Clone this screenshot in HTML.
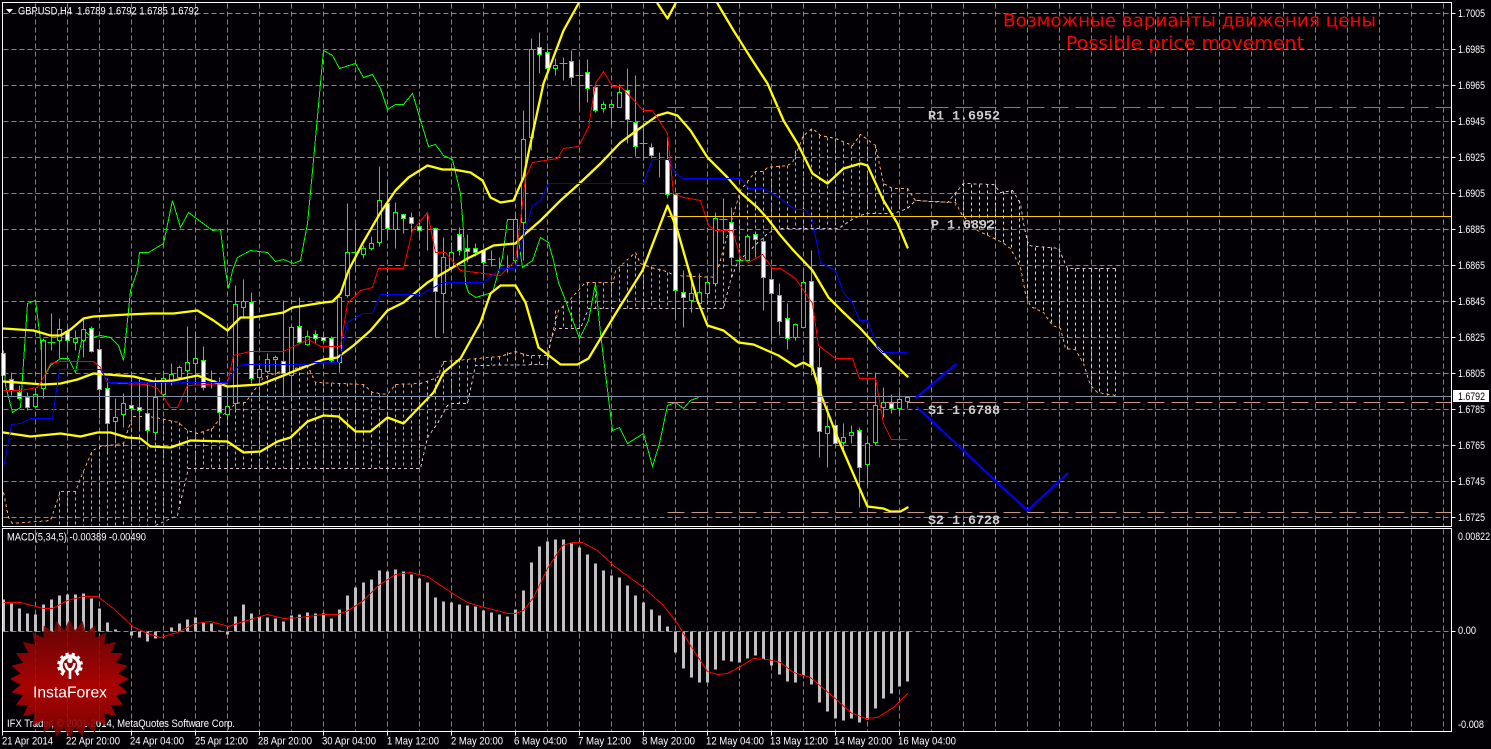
<!DOCTYPE html>
<html><head><meta charset="utf-8"><title>GBPUSD H4</title>
<style>
html,body{margin:0;padding:0;background:#020004;width:1491px;height:749px;overflow:hidden}
svg{display:block;position:absolute;left:0;top:0}
text{font-family:"Liberation Sans",sans-serif;fill:#fff;font-size:11px}
.m{font-family:"Liberation Mono",monospace;font-weight:bold;font-size:13.33px;fill:#cfcfcf}
.t{font-family:"DejaVu Sans",sans-serif;font-size:18px;fill:#f00}
</style></head><body>
<svg width="1491" height="749" viewBox="0 0 1491 749" xmlns="http://www.w3.org/2000/svg">
<defs>
<linearGradient id="lg" gradientUnits="userSpaceOnUse" x1="0" y1="-60" x2="0" y2="60">
<stop offset="0" stop-color="#6e0505"/><stop offset=".3" stop-color="#950404"/><stop offset=".55" stop-color="#bb0303"/><stop offset=".8" stop-color="#a00303"/><stop offset="1" stop-color="#6a0505"/>
</linearGradient>
</defs>
<g transform="translate(.5,.5)" fill="none">
<!-- grid -->
<path stroke="#778899" stroke-dasharray="5 3" shape-rendering="crispEdges" d="M3 13H1451M3 49H1451M3 85H1451M3 121H1451M3 157H1451M3 193H1451M3 229H1451M3 265H1451M3 301H1451M3 337H1451M3 373H1451M3 409H1451M3 445H1451M3 481H1451M3 517H1451
M35 3V526M67 3V526M99 3V526M131 3V526M163 3V526M195 3V526M227 3V526M259 3V526M291 3V526M323 3V526M355 3V526M387 3V526M419 3V526M451 3V526M483 3V526M515 3V526M547 3V526M579 3V526M611 3V526M643 3V526M675 3V526M707 3V526M739 3V526M771 3V526M803 3V526M835 3V526M867 3V526M899 3V526M931 3V526M963 3V526M995 3V526M1027 3V526M1059 3V526M1091 3V526M1123 3V526M1155 3V526M1187 3V526M1219 3V526M1251 3V526M1283 3V526M1315 3V526M1347 3V526M1379 3V526M1411 3V526M1443 3V526
M35 529V731M67 529V731M99 529V731M131 529V731M163 529V731M195 529V731M227 529V731M259 529V731M291 529V731M323 529V731M355 529V731M387 529V731M419 529V731M451 529V731M483 529V731M515 529V731M547 529V731M579 529V731M611 529V731M643 529V731M675 529V731M707 529V731M739 529V731M771 529V731M803 529V731M835 529V731M867 529V731M899 529V731M931 529V731M963 529V731M995 529V731M1027 529V731M1059 529V731M1091 529V731M1123 529V731M1155 529V731M1187 529V731M1219 529V731M1251 529V731M1283 529V731M1315 529V731M1347 529V731M1379 529V731M1411 529V731M1443 529V731
M3 631H1451"/>
<!-- kumo verticals -->
<path stroke="#f4a460" stroke-dasharray="3 3" shape-rendering="crispEdges" d="M59 491V525M67 491V525M75 491V525M83 470V525M91 452V525M99 446V525M107 445V525M115 444V525M123 443V525M131 416V525M139 416V525M147 416V525M155 418V525M163 419V518M171 420V515M179 422V505M187 430V468M195 432V468M203 431V468M211 428V468M219 416V468M227 410V468M235 403V468M243 402V468M251 392V468M259 380V468M267 376V468M275 372V468M283 370V468M291 368V468M299 366V468M307 365V468M315 382V468M323 383V468M331 383V468M339 383V468M347 383V468M355 384V468M363 384V468M371 392V468M379 394V468M387 394V468M395 384V468M403 384V468M411 384V468M419 383V468M427 380V437M435 378V425M443 361V404M451 360V403M459 359V403M467 359V403M475 358V365M483 357V364M491 357V364M499 356V364M507 352V364M515 351V364M523 353V364M531 355V364M539 355V364M547 355V364M555 310V328M563 305V328M571 300V328M579 295V328M587 282V308M595 282V308M603 282V308M611 282V308M619 268V308M627 263V308M635 255V308M643 262V308M651 266V308M659 268V308M667 272V308M675 275V308M683 277V308M691 277V308M699 277V308M707 277V308M715 277V308M723 240V308M731 220V280M739 195V262M747 180V250M755 171V240M763 171V233M771 166V230M779 165V228M787 165V228M795 150V228M803 135V228M811 128V228M819 135V228M827 137V228M835 138V228M843 142V222M851 145V218M859 134V215M867 140V213M875 145V213M883 183V213M891 188V213M899 188V210M907 188V208"/>
<path stroke="#e6cfe0" stroke-dasharray="3 3" shape-rendering="crispEdges" d="M955 192V205M963 183V215M971 184V226M979 184V232M987 184V235M995 184V238M1003 191V242M1011 190V247M1019 200V262M1027 242V300M1035 247V308M1043 247V312M1051 247V323M1059 248V328M1067 268V350M1075 268V349M1083 268V363M1091 268V387M1099 268V393M1107 268V395M1115 268V395"/>
<!-- kumo edges -->
<polyline stroke="#f4a460" stroke-dasharray="3 3" shape-rendering="crispEdges" points="3,492 8,517 12,523 50,520 60,491 75,491 82,473 92,450 100,446 123,443 132,416 147,416 160,418 178,422 187,430 197,433 212,428 220,417 235,403 245,402 263,377 277,372 307,365 315,382 363,384 372,392 387,394 395,384 420,383 437,377 443,361 500,356 515,351 527,355 547,355 552,333 558,310 568,301 585,282 613,282 615,270 635,252 640,263 650,267 663,270 675,275 717,277 717,270 732,217 740,190 755,171 763,171 767,167 787,165 792,162 803,135 812,128 820,135 835,138 852,145 860,134 875,145 883,183 892,188 907,188 915,200 955,202 962,215 977,230 1002,242 1010,248 1020,267 1025,293 1030,306 1043,312 1052,325 1060,328 1065,348 1075,349 1083,363 1090,385 1097,392 1115,395"/>
<polyline stroke="#d8bfd8" stroke-dasharray="3 3" shape-rendering="crispEdges" points="155,525 177,515 182,493 188,468 420,468 427,437 437,423 447,405 452,403 467,403 475,365 547,364 550,340 555,328 580,328 588,308 723,308 730,280 737,262 767,233 773,230 780,228 838,228 853,218 865,213 893,213 907,208 915,200 947,202 963,183 993,184 1000,192 1012,190 1020,203 1023,223 1028,245 1058,248 1067,268 1115,268"/>
<!-- chikou -->
<polyline stroke="#00ff00" shape-rendering="crispEdges" points="3,350 5,385 12,412 20,407 22,377 27,303 35,300 40,340 43,377 50,365 60,358 68,358 75,372 83,330 92,337 100,335 110,337 118,345 123,360 130,290 137,270 139,252 148,252 163,243 172,200 180,227 188,212 212,230 220,229 225,270 228,288 232,270 237,257 250,250 267,252 275,261 283,259 293,263 300,260 307,223 313,160 323,50 332,55 339,68 355,63 363,77 372,74 380,88 387,109 395,104 403,104 412,93 428,146 435,144 443,155 452,159 460,193 463,230 465,283 468,292 475,297 492,292 502,257 507,219 515,219 522,267 532,260 540,237 548,242 553,260 558,282 565,300 579,338 588,320 595,283 600,333 612,430 619,427 627,443 643,433 652,466 659,443 667,405 675,402 683,408 690,400 698,397"/>
<!-- candle wicks -->
<path stroke="#00ff00" shape-rendering="crispEdges" d="M11 372V395M19 385V400M27 392V410M35 390V407M43 338V398M51 313V350M59 318V358M67 328V347M75 330V350M83 317V357M91 326V352M99 340V418M107 378V452M115 398V443M123 393V427M131 372V423M139 377V430M147 383V443M155 377V440M163 370V397M171 363V385M179 365V380M187 326V402M195 331V383M203 346V390M211 370V388M219 377V423M227 392V415M235 285V410M243 279V317M251 292V383M259 365V383M267 353V373M275 355V375M283 300V397M291 325V393M299 297V343M307 330V345M315 330V343M323 332V342M331 336V362M339 295V372M347 203V297M355 224V270M363 245V258M371 236V250M379 166V246M387 180V239M395 202V248M403 214V233M411 212V232M419 222V238M427 212V250M435 228V337M443 237V333M451 242V270M459 227V255M467 234V262M475 243V256M483 250V276M491 250V266M499 257V268M507 255V272M515 213V262M523 110V260M531 38V150M539 32V73M547 48V70M555 58V75M563 57V80M571 50V85M579 62V107M587 59V102M595 82V112M603 101V112M611 100V125M619 84V107M627 68V143M635 75V156M643 122V160M651 143V158M659 152V177M667 137V198M675 194V317M683 270V327M691 273V312M699 273V305M707 275V295M715 212V283M723 198V240M731 207V265M739 255V270M747 236V262M755 233V257M763 237V310M771 270V340M779 283V335M787 303V349M795 323V340M803 270V327M811 250V375M819 347V457M827 405V467M835 424V445M843 423V450M851 425V443M859 427V507M867 437V484M875 372V445M883 387V417M891 394V413M899 392V413M907 397V408M47 342h8M207 380h8M351 252h8M487 259h8M559 63h8M575 75h8M639 143h8M655 159h8M719 219h8M735 260h8"/>
<!-- bullish bodies -->
<path fill="#000" stroke="#00ff00" shape-rendering="crispEdges" d="M33 394h4V406h-4zM41 340h4V388h-4zM57 329h4V340h-4zM73 338h4V342h-4zM81 329h4V340h-4zM113 417h4V421h-4zM121 403h4V414h-4zM153 397h4V432h-4zM161 378h4V394h-4zM169 374h4V380h-4zM177 367h4V377h-4zM185 362h4V370h-4zM193 358h4V363h-4zM225 406h4V414h-4zM233 304h4V403h-4zM241 301h4V307h-4zM257 369h4V377h-4zM265 359h4V371h-4zM273 357h4V359h-4zM289 327h4V375h-4zM305 336h4V344h-4zM337 297h4V362h-4zM345 252h4V295h-4zM361 248h4V254h-4zM369 243h4V248h-4zM377 200h4V242h-4zM393 212h4V229h-4zM441 257h4V293h-4zM449 252h4V267h-4zM513 219h4V260h-4zM521 139h4V222h-4zM529 49h4V137h-4zM553 65h4V68h-4zM601 104h4V108h-4zM609 104h4V107h-4zM617 92h4V107h-4zM689 293h4V300h-4zM697 292h4V303h-4zM705 282h4V293h-4zM713 218h4V283h-4zM745 236h4V260h-4zM793 324h4V337h-4zM801 282h4V327h-4zM825 426h4V433h-4zM841 437h4V442h-4zM849 432h4V435h-4zM865 443h4V464h-4zM873 405h4V442h-4zM881 402h4V407h-4zM897 399h4V408h-4zM905 397h4V401h-4z"/>
<!-- bearish bodies -->
<path fill="#fff" stroke="#00ff00" shape-rendering="crispEdges" d="M1 353h4V375h-4zM9 379h4V390h-4zM17 392h4V398h-4zM25 397h4V407h-4zM65 331h4V340h-4zM89 328h4V351h-4zM97 349h4V389h-4zM105 388h4V423h-4zM129 405h4V408h-4zM137 407h4V410h-4zM145 413h4V430h-4zM201 360h4V387h-4zM217 382h4V412h-4zM249 302h4V378h-4zM281 361h4V373h-4zM297 326h4V342h-4zM313 334h4V338h-4zM321 337h4V340h-4zM329 338h4V360h-4zM385 203h4V228h-4zM401 214h4V218h-4zM409 217h4V223h-4zM417 226h4V230h-4zM433 228h4V291h-4zM457 234h4V250h-4zM465 248h4V251h-4zM473 248h4V252h-4zM481 250h4V262h-4zM537 47h4V54h-4zM545 52h4V68h-4zM569 61h4V77h-4zM585 72h4V88h-4zM593 87h4V110h-4zM625 90h4V119h-4zM633 122h4V146h-4zM649 147h4V155h-4zM665 159h4V194h-4zM673 194h4V290h-4zM681 292h4V297h-4zM729 222h4V257h-4zM753 234h4V239h-4zM761 241h4V277h-4zM769 279h4V293h-4zM777 295h4V321h-4zM785 318h4V338h-4zM809 281h4V366h-4zM817 367h4V431h-4zM833 425h4V443h-4zM857 430h4V467h-4zM889 403h4V408h-4z"/>
<!-- bands -->
<g stroke="#ffff00" stroke-width="2.3" stroke-linejoin="round" stroke-linecap="round">
<polyline points="3,328 33,330 50,335 60,335 70,329 83,318 93,316 127,314 150,313 173,313 197,310 213,320 227,330 240,317 252,317 283,312 292,307 323,302 332,301 340,293 348,270 362,243 380,212 395,190 408,177 427,165 442,169 453,169 470,172 482,180 490,197 500,202 513,200 523,177 530,143 543,83 563,30 578,3"/>
<polyline points="657,3 667,18 675,3"/>
<polyline points="717,3 733,30 750,57 767,83 783,120 797,143 812,173 827,183 843,168 860,163 867,165 883,200 897,223 907,247"/>
<polyline points="3,381 43,384 60,383 77,379 93,373 133,376 153,381 173,380 197,375 213,381 227,386 260,384 283,375 310,364 323,359 337,357 353,345 370,330 387,310 403,302 427,282 447,270 467,258 483,250 493,245 515,243 525,233 540,220 560,200 580,182 600,163 620,142 643,125 657,115 667,112 677,115 690,130 707,157 727,177 740,192 757,207 767,218 780,235 793,250 812,270 828,297 843,312 860,328 877,347 890,360 907,376"/>
<polyline points="3,432 30,436 60,433 80,436 97,432 110,432 127,437 140,438 150,446 170,447 190,440 227,441 243,452 260,451 277,441 290,437 307,421 323,415 338,416 355,431 370,431 387,417 403,423 433,392 443,372 460,358 480,322 490,293 500,285 515,285 525,302 538,347 560,364 577,364 588,358 600,338 617,310 642,270 667,205 677,230 697,300 707,325 723,330 738,342 753,344 778,355 795,366 803,362 812,367 820,393 837,437 850,467 860,490 867,506 883,508 890,511 900,511 907,507"/>
</g>
<!-- tenkan -->
<polyline stroke="#ff0000" shape-rendering="crispEdges" points="3,390 20,390 37,387 43,377 50,363 60,361 93,361 100,367 107,382 120,383 147,384 157,388 170,407 177,407 187,385 227,383 233,355 250,351 283,351 293,346 308,339 320,346 340,346 347,303 360,290 372,287 378,268 403,268 412,230 427,212 435,252 445,252 460,270 483,273 500,275 515,260 520,220 525,177 532,162 557,158 563,148 578,146 588,127 595,83 603,71 612,86 620,86 643,110 652,110 667,133 673,193 683,197 700,200 708,225 715,230 732,230 740,257 748,262 762,254 772,268 780,268 795,278 812,303 818,345 835,358 852,358 859,378 875,378 883,423 891,439 907,439"/>
<!-- kijun -->
<polyline stroke="#0000ff" shape-rendering="crispEdges" points="3,467 11,424 20,423 30,418 52,418 59,369 100,369 108,382 227,382 235,368 242,364 307,364 313,362 339,362 347,322 362,313 372,313 380,294 420,294 443,282 483,282 500,268 515,268 522,240 532,205 540,200 548,183 643,183 652,159 668,159 675,173 683,178 740,178 748,188 763,188 772,193 795,209 805,209 812,220 820,262 835,270 843,292 852,302 859,320 867,320 877,347 882,352 907,352"/>
<!-- levels -->
<path stroke="#d2601e" stroke-dasharray="17 7" shape-rendering="crispEdges" d="M667 107H1451"/>
<path stroke="#ffcc00" shape-rendering="crispEdges" d="M667 216H1451"/>
<path stroke="#c9958a" stroke-dasharray="17 7" shape-rendering="crispEdges" d="M667 402H1451M667 512H1451"/>
<path stroke="#8090a4" shape-rendering="crispEdges" d="M3 396H1451"/>
<!-- forecast -->
<g stroke="#0000ff" stroke-width="2.2" stroke-linecap="round" stroke-linejoin="round"><polyline points="916,397 955,364"/><polyline points="917,407 1000,485 1027,510 1067,473"/></g>
<!-- MACD -->
<path stroke="#c0c0c0" stroke-width="3" shape-rendering="crispEdges" d="M3 631V599M11 631V603M19 631V608M27 631V613M35 631V614M43 631V604M51 631V599M59 631V595M67 631V594M75 631V594M83 631V593M91 631V598M99 631V608M107 631V622M115 631V629M131 631V635M139 631V637M147 631V641M155 631V638M171 631V627M179 631V623M187 631V619M195 631V617M203 631V622M211 631V623M219 631V630M227 631V634M235 631V616M243 631V604M251 631V613M259 631V616M267 631V617M275 631V618M283 631V621M291 631V615M299 631V614M307 631V612M315 631V613M323 631V613M331 631V618M339 631V609M347 631V595M355 631V587M363 631V582M371 631V579M379 631V570M387 631V571M395 631V569M403 631V571M411 631V574M419 631V578M427 631V582M435 631V597M443 631V601M451 631V602M459 631V604M467 631V605M475 631V606M483 631V610M491 631V612M499 631V614M507 631V616M515 631V609M523 631V590M531 631V562M539 631V546M547 631V541M555 631V539M563 631V539M571 631V543M579 631V547M587 631V554M595 631V563M603 631V570M611 631V575M619 631V577M627 631V585M635 631V595M643 631V602M651 631V609M659 631V615M667 631V626M675 631V652M683 631V668M691 631V677M699 631V682M707 631V682M715 631V669M723 631V660M731 631V661M739 631V662M747 631V658M755 631V655M763 631V659M771 631V665M779 631V674M787 631V681M795 631V682M803 631V675M811 631V684M819 631V702M827 631V711M835 631V718M843 631V720M851 631V718M859 631V722M867 631V719M875 631V708M883 631V698M891 631V693M899 631V686M907 631V681"/>
<polyline stroke="#ff0000" shape-rendering="crispEdges" points="3,602 20,602 43,608 52,608 67,600 83,596 97,596 113,608 132,626 147,633 160,637 177,632 195,623 210,621 228,626 243,621 267,614 283,618 300,617 323,614 337,614 348,610 363,600 378,585 395,574 410,572 427,576 452,593 467,602 480,606 500,611 507,613 515,613 523,610 533,597 547,568 562,545 572,542 582,542 597,550 613,565 643,587 663,605 677,623 690,645 707,671 717,674 727,673 740,666 753,658 767,659 780,662 793,672 810,677 823,688 837,700 850,712 865,718 877,717 893,707 907,693"/>
<!-- frames -->
<path stroke="#fff" shape-rendering="crispEdges" d="M2 2H1451V526H2zM2 528H1451V731H2zM2 731V735M67 731V735M131 731V735M195 731V735M259 731V735M323 731V735M387 731V735M451 731V735M515 731V735M579 731V735M643 731V735M707 731V735M771 731V735M835 731V735M899 731V735M1451 13h4M1451 49h4M1451 85h4M1451 121h4M1451 157h4M1451 193h4M1451 229h4M1451 265h4M1451 301h4M1451 337h4M1451 373h4M1451 409h4M1451 445h4M1451 481h4M1451 517h4M1451 631h4"/>
</g>
<polygon points="6,9 13,9 9.5,13" fill="#fff"/>
<text x="18" y="14.5" xml:space="preserve" textLength="181" lengthAdjust="spacingAndGlyphs">GBPUSD,H4  1.6789 1.6792 1.6785 1.6792</text>
<text x="7" y="540.5" textLength="139" lengthAdjust="spacingAndGlyphs">MACD(5,34,5) -0.00389 -0.00490</text>
<text x="7" y="727" textLength="228" lengthAdjust="spacingAndGlyphs">IFX Trader, © 2001-2014, MetaQuotes Software Corp.</text>
<!-- logo -->
<g transform="translate(69.5,679)" opacity=".9">
<polygon fill="url(#lg)" points="59.5,0 48.7,5.5 58,13.2 46.3,16.2 53.6,25.8 41.5,26.1 46.5,37.1 34.6,34.6 37.1,46.5 26.1,41.5 25.8,53.6 16.2,46.3 13.2,58 5.5,48.7 0,59.5 -5.5,48.7 -13.2,58 -16.2,46.3 -25.8,53.6 -26.1,41.5 -37.1,46.5 -34.6,34.6 -46.5,37.1 -41.5,26.1 -53.6,25.8 -46.3,16.2 -58,13.2 -48.7,5.5 -59.5,0 -48.7,-5.5 -58,-13.2 -46.3,-16.2 -53.6,-25.8 -41.5,-26.1 -46.5,-37.1 -34.6,-34.6 -37.1,-46.5 -26.1,-41.5 -25.8,-53.6 -16.2,-46.3 -13.2,-58 -5.5,-48.7 0,-59.5 5.5,-48.7 13.2,-58 16.2,-46.3 25.8,-53.6 26.1,-41.5 37.1,-46.5 34.6,-34.6 46.5,-37.1 41.5,-26.1 53.6,-25.8 46.3,-16.2 58,-13.2 48.7,-5.5"/>
</g>
<g fill="none" stroke="#fff">
<path d="M64.6 672.5A9 9 0 1 1 75.4 672.5" stroke-width="3.6"/>
<path d="M63.4 674.9A11.6 11.6 0 1 1 76.6 674.9" stroke-width="2.6" stroke-dasharray="3.2 3"/>
<path d="M65.5 663Q66 669 70 670Q74 669 74.5 663M70 668V679" stroke-width="2.6"/>
<circle cx="70" cy="660.5" r="2.6" fill="#fff" stroke="none"/>
</g>
<text x="33" y="697.5" style="font-size:16px" textLength="74" lengthAdjust="spacingAndGlyphs">InstaForex</text>
<!-- price labels -->
<g>
<text x="1458" y="17" textLength="27" lengthAdjust="spacingAndGlyphs">1.7005</text>
<text x="1458" y="53" textLength="27" lengthAdjust="spacingAndGlyphs">1.6985</text>
<text x="1458" y="89" textLength="27" lengthAdjust="spacingAndGlyphs">1.6965</text>
<text x="1458" y="125" textLength="27" lengthAdjust="spacingAndGlyphs">1.6945</text>
<text x="1458" y="161" textLength="27" lengthAdjust="spacingAndGlyphs">1.6925</text>
<text x="1458" y="197" textLength="27" lengthAdjust="spacingAndGlyphs">1.6905</text>
<text x="1458" y="233" textLength="27" lengthAdjust="spacingAndGlyphs">1.6885</text>
<text x="1458" y="269" textLength="27" lengthAdjust="spacingAndGlyphs">1.6865</text>
<text x="1458" y="305" textLength="27" lengthAdjust="spacingAndGlyphs">1.6845</text>
<text x="1458" y="341" textLength="27" lengthAdjust="spacingAndGlyphs">1.6825</text>
<text x="1458" y="377" textLength="27" lengthAdjust="spacingAndGlyphs">1.6805</text>
<text x="1458" y="413" textLength="27" lengthAdjust="spacingAndGlyphs">1.6785</text>
<text x="1458" y="449" textLength="27" lengthAdjust="spacingAndGlyphs">1.6765</text>
<text x="1458" y="485" textLength="27" lengthAdjust="spacingAndGlyphs">1.6745</text>
<text x="1458" y="521" textLength="27" lengthAdjust="spacingAndGlyphs">1.6725</text>
<rect x="1453" y="390" width="36" height="12" fill="#fff"/>
<text x="1458" y="400" textLength="27" lengthAdjust="spacingAndGlyphs" style="fill:#000">1.6792</text>
<text x="1458" y="540" textLength="32" lengthAdjust="spacingAndGlyphs">0.00822</text>
<text x="1458" y="634" textLength="18" lengthAdjust="spacingAndGlyphs">0.00</text>
<text x="1458" y="728" textLength="26" lengthAdjust="spacingAndGlyphs">-0.008</text>
</g>
<!-- date labels -->
<g>
<text x="2" y="744.5" textLength="51" lengthAdjust="spacingAndGlyphs">21 Apr 2014</text>
<text x="66" y="744.5" textLength="54" lengthAdjust="spacingAndGlyphs">22 Apr 20:00</text>
<text x="130" y="744.5" textLength="54" lengthAdjust="spacingAndGlyphs">24 Apr 04:00</text>
<text x="195" y="744.5" textLength="53" lengthAdjust="spacingAndGlyphs">25 Apr 12:00</text>
<text x="258" y="744.5" textLength="54" lengthAdjust="spacingAndGlyphs">28 Apr 20:00</text>
<text x="322" y="744.5" textLength="54" lengthAdjust="spacingAndGlyphs">30 Apr 04:00</text>
<text x="387" y="744.5" textLength="52" lengthAdjust="spacingAndGlyphs">1 May 12:00</text>
<text x="451" y="744.5" textLength="52" lengthAdjust="spacingAndGlyphs">2 May 20:00</text>
<text x="514" y="744.5" textLength="53" lengthAdjust="spacingAndGlyphs">6 May 04:00</text>
<text x="578" y="744.5" textLength="53" lengthAdjust="spacingAndGlyphs">7 May 12:00</text>
<text x="642" y="744.5" textLength="53" lengthAdjust="spacingAndGlyphs">8 May 20:00</text>
<text x="706" y="744.5" textLength="58" lengthAdjust="spacingAndGlyphs">12 May 04:00</text>
<text x="770" y="744.5" textLength="58" lengthAdjust="spacingAndGlyphs">13 May 12:00</text>
<text x="834" y="744.5" textLength="58" lengthAdjust="spacingAndGlyphs">14 May 20:00</text>
<text x="898" y="744.5" textLength="58" lengthAdjust="spacingAndGlyphs">16 May 04:00</text>
</g>
<text class="m" x="928" y="119.5" xml:space="preserve">R1 1.6952</text>
<text class="m" x="931" y="228.5" xml:space="preserve">P 1.6892</text>
<text class="m" x="928" y="414" xml:space="preserve">S1 1.6788</text>
<text class="m" x="928" y="524" xml:space="preserve">S2 1.6728</text>
<text class="t" x="1003" y="26.5" textLength="373" lengthAdjust="spacingAndGlyphs">Возможные варианты движения цены</text>
<text class="t" x="1066" y="49" textLength="238" lengthAdjust="spacingAndGlyphs">Possible price movement</text>
</svg>
</body></html>
